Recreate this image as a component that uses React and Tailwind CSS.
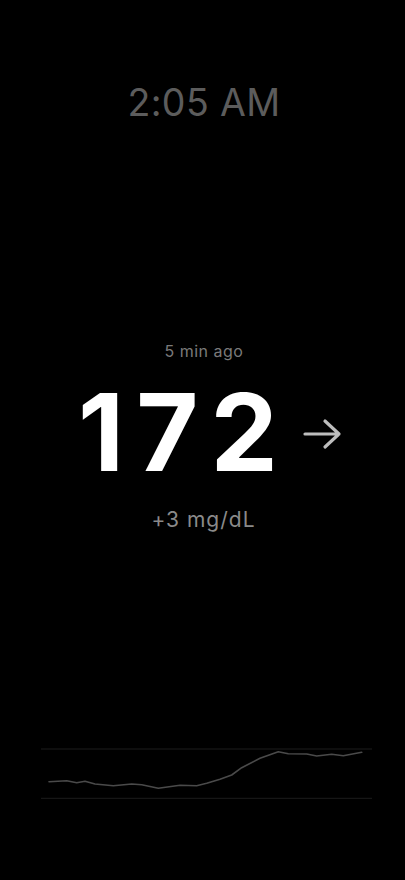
import React from 'react';

const points = [
  [49, 781.7], [66.7, 780.7], [76.7, 782.7], [85, 781.3], [95, 784], [113.3, 785.7],
  [131.7, 784], [141.7, 784.7], [158.3, 788.3], [180, 785.3], [196.7, 785.7], [206.7, 783.3],
  [220, 779.3], [231.7, 775], [241.7, 767.7], [260, 758.3], [278.3, 751.7], [288.3, 753.7],
  [306.7, 754], [316.7, 756], [331.7, 754.3], [343.3, 755.7], [361.7, 752.3],
];

function TrendChart() {
  // coordinates measured on the page, shifted into the chart box
  const d = points
    .map(([x, y], i) => `${i === 0 ? 'M' : 'L'}${(x - 41).toFixed(1)} ${(y - 745).toFixed(1)}`)
    .join(' ');
  return (
    <svg width="331" height="57" viewBox="0 0 331 57" className="block">
      <line x1="0" y1="4" x2="331" y2="4" stroke="#1c1c1c" strokeWidth="1" />
      <line x1="0" y1="53.3" x2="331" y2="53.3" stroke="#1c1c1c" strokeWidth="1" />
      <path d={d} fill="none" stroke="#4a4a4a" strokeWidth="1.6" strokeLinejoin="round" strokeLinecap="round" />
    </svg>
  );
}

export default function App() {
  return (
    <div className="h-[880px] w-full bg-black flex flex-col items-center font-['Inter',sans-serif]">
      <div className="pt-[80px] pl-[3px] text-[37.5px] leading-[46px] text-[#5c5c5c] tracking-[0.4px]">2:05 AM</div>

      <div className="mt-[215px] flex flex-col items-center">
        <div className="pl-[3px] text-[16px] leading-[20px] text-[#7a7a7a] tracking-[0.5px]">5 min ago</div>
        <div className="mt-[17px] flex items-center pl-[16px]">
          <span className="text-[107px] leading-[108px] font-bold text-white tracking-[12px]">172</span>
          <svg width="40" height="32" viewBox="0 0 40 32" className="ml-[13px] mt-[4px]">
            <path d="M2 16 H36 M22 3 L36 16 L22 29" fill="none" stroke="#bdbdbd" strokeWidth="3.2" strokeLinecap="round" strokeLinejoin="round" />
          </svg>
        </div>
        <div className="mt-[21px] pl-[2px] text-[21px] leading-[26px] text-[#8a8a8a] tracking-[1px]">+3 mg/dL</div>
      </div>

      <div className="mt-auto mb-[78px] ml-[8px]">
        <TrendChart />
      </div>
    </div>
  );
}
